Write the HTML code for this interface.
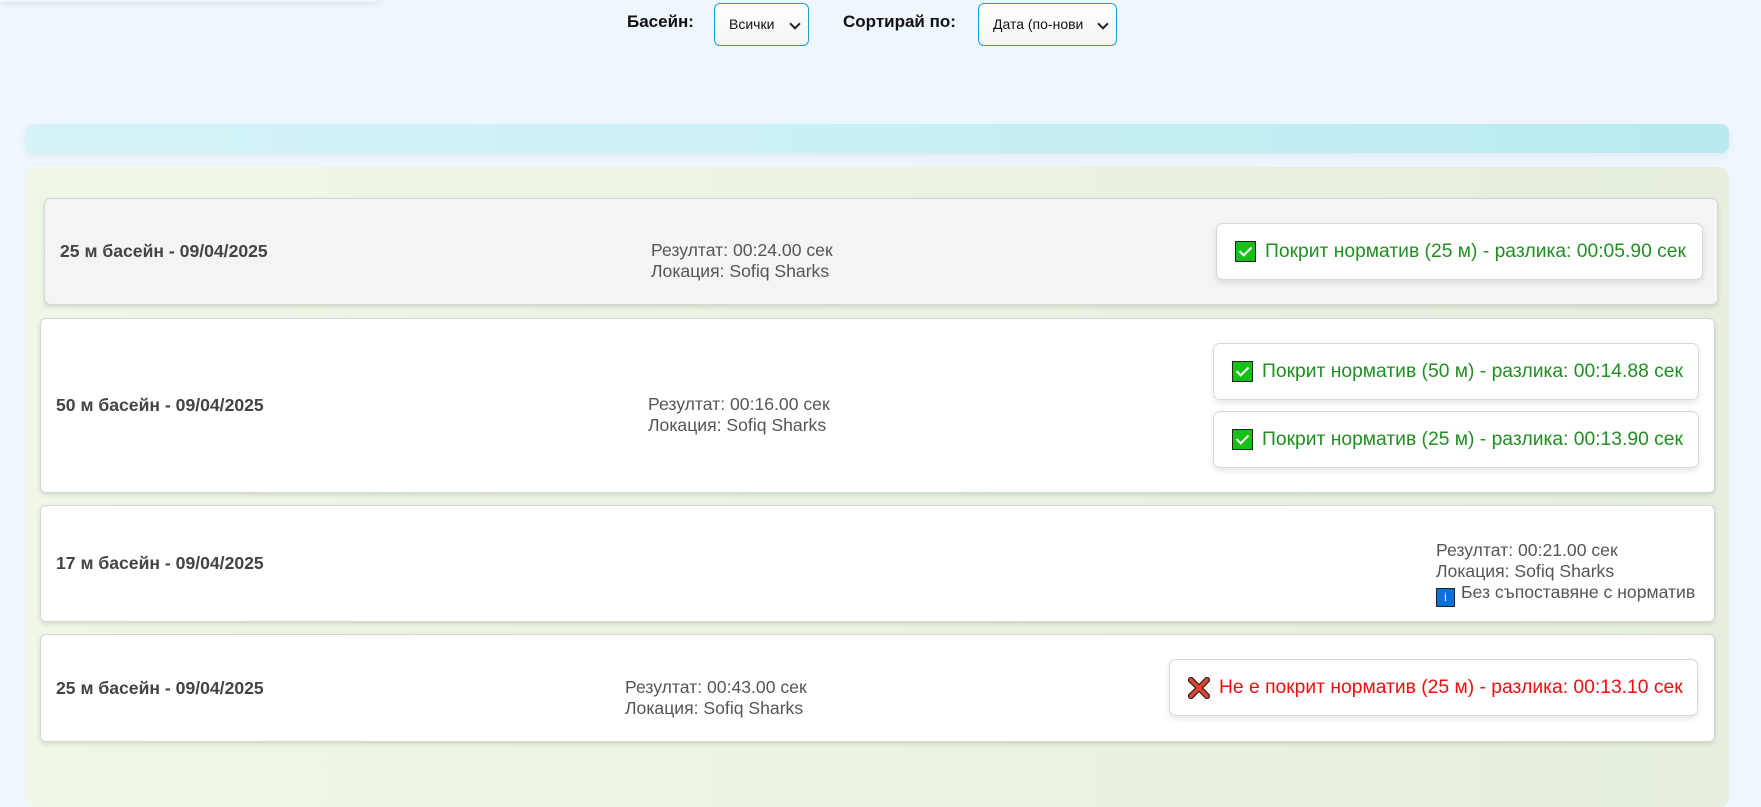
<!DOCTYPE html>
<html><head><meta charset="utf-8">
<style>
*{box-sizing:border-box;margin:0;padding:0}
body{width:1761px;height:748px;overflow:hidden;background:#eef6fe;font-family:"Liberation Sans",sans-serif;position:relative}
.a{position:absolute}
.hdr{left:0;top:-20px;width:382px;height:22px;box-shadow:0 2px 8px rgba(0,0,0,.08);border-radius:0 0 8px 0;background:#eef6fe}
.lbl{font-weight:bold;font-size:17px;color:#111;top:12px}
.sel{top:3px;height:43px;border:1px solid #1ba0d8;border-radius:6px;background:linear-gradient(#fff,#f4f4f4);font-size:14px;color:#111;padding:0 0 0 14px;line-height:41px}
.sel:after{content:"";position:absolute;right:9px;top:16px;width:6px;height:6px;border-right:2px solid #222;border-bottom:2px solid #222;transform:rotate(45deg)}
.bar{left:25px;top:124px;width:1704px;height:29px;border-radius:8px;background:linear-gradient(90deg,#d6f4f8,#b9eaf1);box-shadow:0 3px 8px rgba(0,0,0,.06)}
.cont{left:25px;top:167px;width:1704px;height:640px;border-radius:10px;background:linear-gradient(90deg,#eff7e8,#e6efdf)}
.card{background:#fff;border:1px solid #d4d8d4;border-radius:6px;box-shadow:0 2px 5px rgba(0,0,0,.12)}
.t{font-weight:bold;font-size:17.6px;color:#444}
.b{font-size:17.6px;color:#555;line-height:21px}
.badge{background:#fff;border:1px solid #d6d8dc;border-radius:7px;box-shadow:0 3px 7px rgba(0,0,0,.1);font-size:19.3px;color:#1f8f1f;padding:0 0 0 18px;display:flex;align-items:center;white-space:nowrap}
.ck{width:21px;height:21px;background:#16c016;border:1.5px solid #222;margin-right:9px;position:relative;flex:none}
.ck:after{content:"";position:absolute;left:6px;top:2px;width:5px;height:10px;border-right:2px solid #fff;border-bottom:2px solid #fff;transform:rotate(45deg)}
</style></head><body>
<div class="a hdr"></div>
<div class="a lbl" style="left:627px">Басейн:</div>
<div class="a sel" style="left:714px;width:95px">Всички</div>
<div class="a lbl" style="left:843px">Сортирай по:</div>
<div class="a sel" style="left:978px;width:139px">Дата (по-нови</div>
<div class="a bar"></div>
<div class="a cont"></div>

<div class="a card" style="left:44px;top:198px;width:1674px;height:107px;background:#f4f4f4"></div>
<div class="a t" style="left:60px;top:241px">25 м басейн - 09/04/2025</div>
<div class="a b" style="left:651px;top:240px">Резултат: 00:24.00 сек<br>Локация: Sofiq Sharks</div>
<div class="a badge" style="left:1216px;top:223px;width:487px;height:57px"><span class="ck"></span>Покрит норматив (25 м) - разлика: 00:05.90 сек</div>

<div class="a card" style="left:40px;top:318px;width:1675px;height:175px"></div>
<div class="a t" style="left:56px;top:395px">50 м басейн - 09/04/2025</div>
<div class="a b" style="left:648px;top:394px">Резултат: 00:16.00 сек<br>Локация: Sofiq Sharks</div>
<div class="a badge" style="left:1213px;top:343px;width:486px;height:57px"><span class="ck"></span>Покрит норматив (50 м) - разлика: 00:14.88 сек</div>
<div class="a badge" style="left:1213px;top:411px;width:486px;height:57px"><span class="ck"></span>Покрит норматив (25 м) - разлика: 00:13.90 сек</div>

<div class="a card" style="left:40px;top:505px;width:1675px;height:117px"></div>
<div class="a t" style="left:56px;top:553px">17 м басейн - 09/04/2025</div>
<div class="a b" style="left:1436px;top:540px">Резултат: 00:21.00 сек<br>Локация: Sofiq Sharks<br><span style="display:inline-block;width:19px;height:19px;background:#0a72d6;border:1.5px solid #222;color:#fff;font-size:12px;text-align:center;line-height:16px;vertical-align:-3px;margin-right:6px">i</span>Без съпоставяне с норматив</div>

<div class="a card" style="left:40px;top:634px;width:1675px;height:108px"></div>
<div class="a t" style="left:56px;top:678px">25 м басейн - 09/04/2025</div>
<div class="a b" style="left:625px;top:677px">Резултат: 00:43.00 сек<br>Локация: Sofiq Sharks</div>
<div class="a badge" style="left:1169px;top:659px;width:529px;height:57px;color:#f20d0d"><svg width="22" height="22" viewBox="0 0 22 22" style="margin-right:9px;flex:none"><path d="M3 3L19 19M19 3L3 19" stroke="#222" stroke-width="6" stroke-linecap="square"/><path d="M3 3L19 19M19 3L3 19" stroke="#e5452a" stroke-width="3.5" stroke-linecap="square"/></svg>Не е покрит норматив (25 м) - разлика: 00:13.10 сек</div>
</body></html>
